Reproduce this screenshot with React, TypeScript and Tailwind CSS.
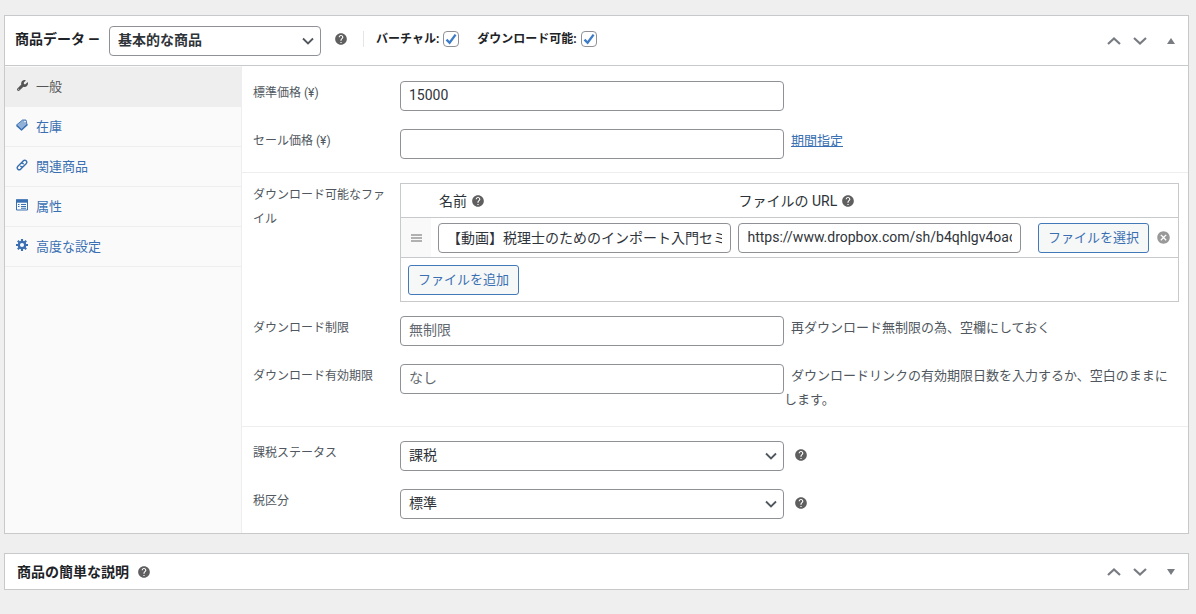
import { useId, useState } from 'react';
import type { ReactNode, SelectHTMLAttributes, InputHTMLAttributes } from 'react';
import { FaWrench } from 'react-icons/fa6';
import { MdCancel, MdHelp } from 'react-icons/md';

const FIELD =
  'h-[30px] min-w-0 rounded-[4px] border border-[#8f9196] bg-white px-2 pb-0.5 text-sm text-[#2f343a] placeholder:text-[#646970] placeholder:opacity-100';
const OUTLINE_BUTTON =
  'h-[30px] w-[111px] whitespace-nowrap rounded-[3px] border border-[#4279b8] bg-[#f6f7f7] text-center text-[13px] leading-7 text-[#3a70b2]';

function HelpTip() {
  return (
    <button type="button" aria-label="ヘルプ" className="block shrink-0 text-[#5f5f5f]">
      <MdHelp className="size-3.5" />
    </button>
  );
}

function Select({ className, children, ...rest }: SelectHTMLAttributes<HTMLSelectElement> & { children: ReactNode }) {
  return (
    <div className={`grid shrink-0 items-center ${className ?? ''}`}>
      <select {...rest} className={`${FIELD} col-start-1 row-start-1 w-full appearance-none pr-6`}>
        {children}
      </select>
      <svg viewBox="0 0 12 8" className="pointer-events-none col-start-1 row-start-1 mr-[7px] h-2 w-3 justify-self-end" fill="none" stroke="#50575e" strokeWidth="1.8">
        <path d="M1 1.5 6 6.5 11 1.5" />
      </svg>
    </div>
  );
}

function Check({ label }: { label: string }) {
  return (
    <label className="flex items-center gap-1 text-xs font-bold text-[#1d2327]">
      <span>{label}</span>
      <span className="grid size-4 place-items-center">
        <input type="checkbox" defaultChecked className="peer col-start-1 row-start-1 size-4 appearance-none rounded-[4px] border border-[#8f9196] bg-white" />
        <svg viewBox="0 0 12 12" className="pointer-events-none invisible col-start-1 row-start-1 size-3 peer-checked:visible" fill="none" stroke="#3b7bc8" strokeWidth="2.3">
          <path d="M1.5 6.6 4.6 9.8 10.6 1.6" />
        </svg>
      </span>
    </label>
  );
}

function PanelHandles({ open }: { open: boolean }) {
  return (
    <div className="ml-auto flex items-center gap-3 pr-[13px] text-[#787c82]">
      <button type="button" aria-label="上に移動">
        <svg viewBox="0 0 14 8" className="h-2 w-3.5" fill="none" stroke="currentColor" strokeWidth="2.2">
          <path d="M1 7 7 1.5 13 7" />
        </svg>
      </button>
      <button type="button" aria-label="下に移動">
        <svg viewBox="0 0 14 8" className="h-2 w-3.5" fill="none" stroke="currentColor" strokeWidth="2.2">
          <path d="M1 1 7 6.5 13 1" />
        </svg>
      </button>
      <button type="button" aria-label="パネルを切り替え" className="ml-2">
        <svg viewBox="0 0 8 6" className="h-1.5 w-2" fill="currentColor">
          <path d={open ? 'M4 0 8 6H0Z' : 'M4 6 0 0H8Z'} />
        </svg>
      </button>
    </div>
  );
}

function TagIcon() {
  return (
    <svg viewBox="0 0 24 24" className="size-3">
      <path d="M1 12 13 2 20 2 22 11 11 21Z" fill="#8fb1d8" stroke="currentColor" strokeWidth="1.8" strokeLinejoin="round" />
      <path d="M1 13 11 22 23 11" fill="none" stroke="currentColor" strokeWidth="2.6" strokeLinejoin="round" />
      <circle cx="18" cy="5" r="1.6" fill="#fff" />
    </svg>
  );
}

function LinkIcon() {
  return (
    <svg viewBox="0 0 24 24" className="size-3" fill="none" stroke="currentColor" strokeWidth="2.8" strokeLinecap="round">
      <path d="M9.5 14.5a4 4 0 0 0 5.6 0l5.6-5.6a4 4 0 0 0-5.6-5.6L11 7.3" />
      <path d="M14.5 9.5a4 4 0 0 0-5.6 0l-5.6 5.6a4 4 0 0 0 5.6 5.6L13 16.7" />
    </svg>
  );
}

function ListIcon() {
  return (
    <svg viewBox="0 0 12 12" className="size-3" fill="none" stroke="currentColor">
      <path d="M.5 1h11v10H.5z" />
      <path d="M0 2h12" strokeWidth="3.4" />
      <path d="M2 5.5h1.5M5 5.5h5M2 7.5h1.5M5 7.5h5M5 9.2h5" strokeWidth="1.1" />
    </svg>
  );
}

function GearIcon() {
  return (
    <svg viewBox="0 0 24 24" className="size-3" fill="none" stroke="currentColor">
      <circle cx="12" cy="12" r="6.4" strokeWidth="4.6" />
      <path d="M12 0v5M12 19v5M0 12h5M19 12h5M3.6 3.6 7 7M17 17l3.4 3.4M3.6 20.4 7 17M17 7l3.4-3.4" strokeWidth="4.2" />
    </svg>
  );
}

const TABS = [
  { name: '一般', icon: <FaWrench className="size-[11px]" /> },
  { name: '在庫', icon: <TagIcon /> },
  { name: '関連商品', icon: <LinkIcon /> },
  { name: '属性', icon: <ListIcon /> },
  { name: '高度な設定', icon: <GearIcon /> },
];

function Row({ label, children, htmlFor }: { label: string; children: ReactNode; htmlFor: string }) {
  return (
    <div className="flex pb-[18px]">
      <label htmlFor={htmlFor} className="w-[147px] shrink-0 text-xs leading-6 text-[#50575e]">
        {label}
      </label>
      <div className="flex min-w-0 flex-1">{children}</div>
    </div>
  );
}

function TextRow({ label, note, ...rest }: { label: string; note?: ReactNode } & InputHTMLAttributes<HTMLInputElement>) {
  const id = useId();
  return (
    <Row label={label} htmlFor={id}>
      <div className="flex h-[30px] min-w-0 flex-1">
        <div className="w-[384px] shrink-0">
          <input id={id} type="text" {...rest} className={`${FIELD} w-full`} />
        </div>
        {note && <p className="min-w-0 flex-1 indent-[7px] text-[13px] leading-6 text-[#50575e]">{note}</p>}
      </div>
    </Row>
  );
}

function SelectRow({ label, option }: { label: string; option: string }) {
  const id = useId();
  return (
    <Row label={label} htmlFor={id}>
      <Select id={id} className="w-[384px]">
        <option>{option}</option>
      </Select>
      <div className="ml-2.5 flex h-[27px] items-center">
        <HelpTip />
      </div>
    </Row>
  );
}

function DownloadTable() {
  return (
    <table className="w-full table-fixed border-separate border-spacing-0 border border-[#c8c9cb] text-sm text-[#2c3338]">
      <colgroup>
        <col className="w-[30px]" />
        <col />
        <col className="w-[37%]" />
        <col className="w-[128px]" />
        <col className="w-[29px]" />
      </colgroup>
      <thead>
        <tr className="h-[34px]">
          <th className="border-b border-[#c8c9cb]" />
          <th className="border-b border-[#c8c9cb] pl-2 text-left leading-5 font-normal">
            <div className="flex items-center gap-1">
              名前 <HelpTip />
            </div>
          </th>
          <th colSpan={3} className="border-b border-[#c8c9cb] pl-[5px] text-left leading-5 font-normal">
            <div className="flex items-center gap-1">
              ファイルの URL <HelpTip />
            </div>
          </th>
        </tr>
      </thead>
      <tbody>
        <tr className="h-10">
          <td className="border-b border-[#c8c9cb] bg-[#f9f9f9]">
            <svg viewBox="0 0 11 8" className="mx-auto h-2 w-[11px]" stroke="#999" strokeWidth="1.4">
              <path d="M0 1h11M0 4h11M0 7h11" />
            </svg>
          </td>
          <td className="border-b border-[#c8c9cb] pr-0.5 pl-[7px]">
            <input
              type="text"
              aria-label="名前"
              defaultValue="【動画】税理士のためのインポート入門セミナー"
              className={`${FIELD} block w-full`}
            />
          </td>
          <td className="border-b border-[#c8c9cb] pl-[5px]">
            <input
              type="text"
              aria-label="ファイルの URL"
              defaultValue="https://www.dropbox.com/sh/b4qhlgv4oac"
              className={`${FIELD} block w-full`}
            />
          </td>
          <td className="border-b border-[#c8c9cb]">
            <button type="button" className={`${OUTLINE_BUTTON} ml-auto block`}>
              ファイルを選択
            </button>
          </td>
          <td className="border-b border-[#c8c9cb]">
            <button type="button" aria-label="削除" className="mx-auto block text-[#999]">
              <MdCancel className="size-[15px]" />
            </button>
          </td>
        </tr>
      </tbody>
      <tfoot>
        <tr className="h-[43px]">
          <td colSpan={5} className="pl-[7px]">
            <button type="button" className={`${OUTLINE_BUTTON} block`}>
              ファイルを追加
            </button>
          </td>
        </tr>
      </tfoot>
    </table>
  );
}

export default function App() {
  const [active, setActive] = useState(0);
  return (
    <main className="min-h-screen bg-[#efefef] pt-[15px] pr-[7px] pb-6 pl-1 font-['Roboto','Noto_Sans_CJK_JP',sans-serif]">
      <section className="border border-[#c8c9cb] bg-white">
        <header className="flex h-[50px] items-center border-b border-[#c8c9cb] pl-2.5 text-sm text-[#1d2327]">
          <label htmlFor="product-type" className="w-[94px] shrink-0 pb-1 leading-6 font-bold whitespace-nowrap">
            商品データ —
          </label>
          <Select id="product-type" className="w-[212px] font-bold">
            <option>基本的な商品</option>
          </Select>
          <div className="flex items-center pb-[3px]">
            <div className="mx-[13px]">
              <HelpTip />
            </div>
            <div className="ml-0.5 flex items-center gap-[18px] border-l border-[#e5e5e5] pl-3 leading-[14px]">
              <Check label="バーチャル:" />
              <Check label="ダウンロード可能:" />
            </div>
          </div>
          <PanelHandles open />
        </header>

        <div className="flex">
          <nav className="w-[237px] shrink-0 border-r border-[#eee] bg-[#fafafa]">
            <ul className="pt-px">
              {TABS.map((tab, i) => (
                <li key={tab.name}>
                  <a
                    href="#"
                    onClick={(e) => {
                      e.preventDefault();
                      setActive(i);
                    }}
                    className={`flex h-10 items-center gap-2 border-b border-[#eee] pl-[11px] text-[13px] ${
                      active === i ? 'bg-[#eee] text-[#555]' : 'text-[#3a70b2]'
                    }`}
                  >
                    <span className="flex w-3 justify-center pb-[3px]">{tab.icon}</span>
                    {tab.name}
                  </a>
                </li>
              ))}
            </ul>
          </nav>

          <form className="min-w-0 flex-1" onSubmit={(e) => e.preventDefault()}>
            <div className="border-b border-[#eee] pt-[15px] pr-[9px] pl-[11px]">
              <TextRow label="標準価格 (¥)" defaultValue="15000" />
              <div className="-mb-[5px]">
                <TextRow
                  label="セール価格 (¥)"
                  note={
                    <a href="#" className="text-[#3a70b2] underline">
                      期間指定
                    </a>
                  }
                />
              </div>
            </div>
            <div className="border-b border-[#eee] pt-2.5 pr-[9px] pb-3.5 pl-[11px]">
              <div className="flex pb-3.5">
                <div className="w-[147px] shrink-0 pr-1.5 text-xs leading-6 text-[#50575e]">ダウンロード可能なファイル</div>
                <div className="min-w-0 flex-1">
                  <DownloadTable />
                </div>
              </div>
              <TextRow label="ダウンロード制限" placeholder="無制限" note="再ダウンロード無制限の為、空欄にしておく" />
              <TextRow
                label="ダウンロード有効期限"
                placeholder="なし"
                note="ダウンロードリンクの有効期限日数を入力するか、空白のままにします。"
              />
            </div>
            <div className="-mb-1 pt-3.5 pr-[9px] pl-[11px]">
              <SelectRow label="課税ステータス" option="課税" />
              <SelectRow label="税区分" option="標準" />
            </div>
          </form>
        </div>
      </section>

      <section className="mt-[19px] border border-[#c8c9cb] bg-white">
        <header className="flex h-[35px] items-center pl-3 text-sm text-[#1d2327]">
          <h2 className="mr-2 leading-5 font-bold">商品の簡単な説明</h2>
          <HelpTip />
          <PanelHandles open={false} />
        </header>
      </section>
    </main>
  );
}
